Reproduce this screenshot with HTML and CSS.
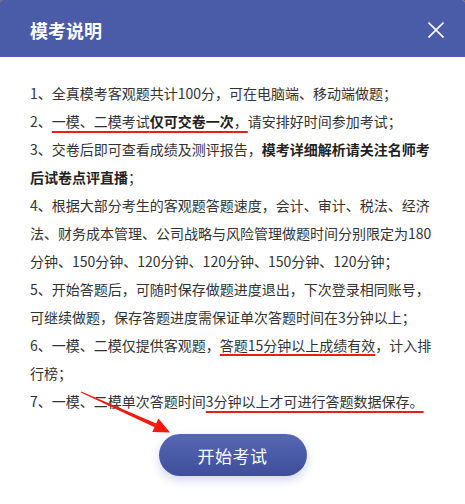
FILE: index.html
```html
<!DOCTYPE html>
<html lang="zh-CN">
<head>
<meta charset="utf-8">
<title>模考说明</title>
<link rel="stylesheet" href="styles.css">
</head>
<body>
<div class="modal">
  <div class="header">
    <h1 class="title">模考说明</h1>
    <svg class="close" width="16" height="16" viewBox="0 0 16 16" aria-label="关闭">
      <path d="M0.5 0.5 L15.5 15.5 M15.5 0.5 L0.5 15.5" stroke="#fff" stroke-width="1.6" fill="none"/>
    </svg>
  </div>
  <div class="body">
    <p class="line">1、全真模考客观题共计100分，可在电脑端、移动端做题；</p>
    <p class="line">2、<span class="mark">一模、二模考试<b>仅可交卷一次</b>，</span>请安排好时间参加考试；</p>
    <p class="line">3、交卷后即可查看成绩及测评报告，<b>模考详细解析请关注名师考后试卷点评直播</b>；</p>
    <p class="line">4、根据大部分考生的客观题答题速度，会计、审计、税法、经济法、财务成本管理、公司战略与风险管理做题时间分别限定为180分钟、150分钟、120分钟、120分钟、150分钟、120分钟；</p>
    <p class="line">5、开始答题后，可随时保存做题进度退出，下次登录相同账号，可继续做题，保存答题进度需保证单次答题时间在3分钟以上；</p>
    <p class="line">6、一模、二模仅提供客观题，<span class="mark mark-6">答题15分钟以上成绩有效</span>，计入排行榜；</p>
    <p class="line">7、一模、二模单次答题时间<span class="mark mark-7">3分钟以上才可进行答题数据保存。</span></p>
    <div class="actions">
      <button class="start">开始考试</button>
    </div>
  </div>
  <svg class="arrow" width="465" height="504" viewBox="0 0 465 504">
    <polygon points="80.8,392.5 81.2,391.5 156.2,423.6 154.6,427.2" fill="#f2190f"/>
    <polygon points="170,432.5 152.3,432 158.4,418.6" fill="#f2190f"/>
  </svg>
</div>
</body>
</html>
```

FILE: styles.css
```css
html, body {
  margin: 0;
  padding: 0;
  background: #6b4a3a;
}
.modal {
  position: relative;
  width: 465px;
  height: 504px;
  background: #ffffff;
  border-radius: 3px 3px 0 0;
  overflow: hidden;
  font-family: "Noto Sans CJK SC", "Noto Sans", sans-serif;
}
.header {
  height: 57px;
  background: #4a5ba8;
  display: flex;
  align-items: center;
  justify-content: space-between;
  padding: 0 21px 0 30px;
}
.title {
  margin: 0;
  font-size: 18px;
  font-weight: 700;
  color: #ffffff;
  line-height: 1;
  position: relative;
  top: 1px;
}
.close {
  display: block;
  position: relative;
  top: 1px;
}
.body {
  padding: 22px 30px 0 30px;
  color: #333333;
  font-size: 14px;
  line-height: 28px;
}
.line {
  margin: 0;
}
.line b {
  font-weight: 700;
  color: #222222;
}
.mark {
  text-decoration: underline;
  text-decoration-color: #ee1c12;
  text-decoration-thickness: 2px;
  text-underline-offset: 4px;
}
.mark-6 {
  text-underline-offset: 3px;
}
.actions {
  display: flex;
  justify-content: center;
  padding-top: 19px;
}
.start {
  width: 148px;
  height: 42px;
  border: none;
  border-radius: 21px;
  background: linear-gradient(180deg, #5567b3 0%, #3f4e9b 100%);
  box-shadow: 0 4px 10px rgba(90, 100, 190, 0.28);
  color: #ffffff;
  font-family: "Noto Sans CJK SC", "Noto Sans", sans-serif;
  font-size: 17px;
  letter-spacing: 0.5px;
  padding: 0;
  cursor: pointer;
}
.arrow {
  position: absolute;
  left: 0;
  top: 0;
  pointer-events: none;
}
```
